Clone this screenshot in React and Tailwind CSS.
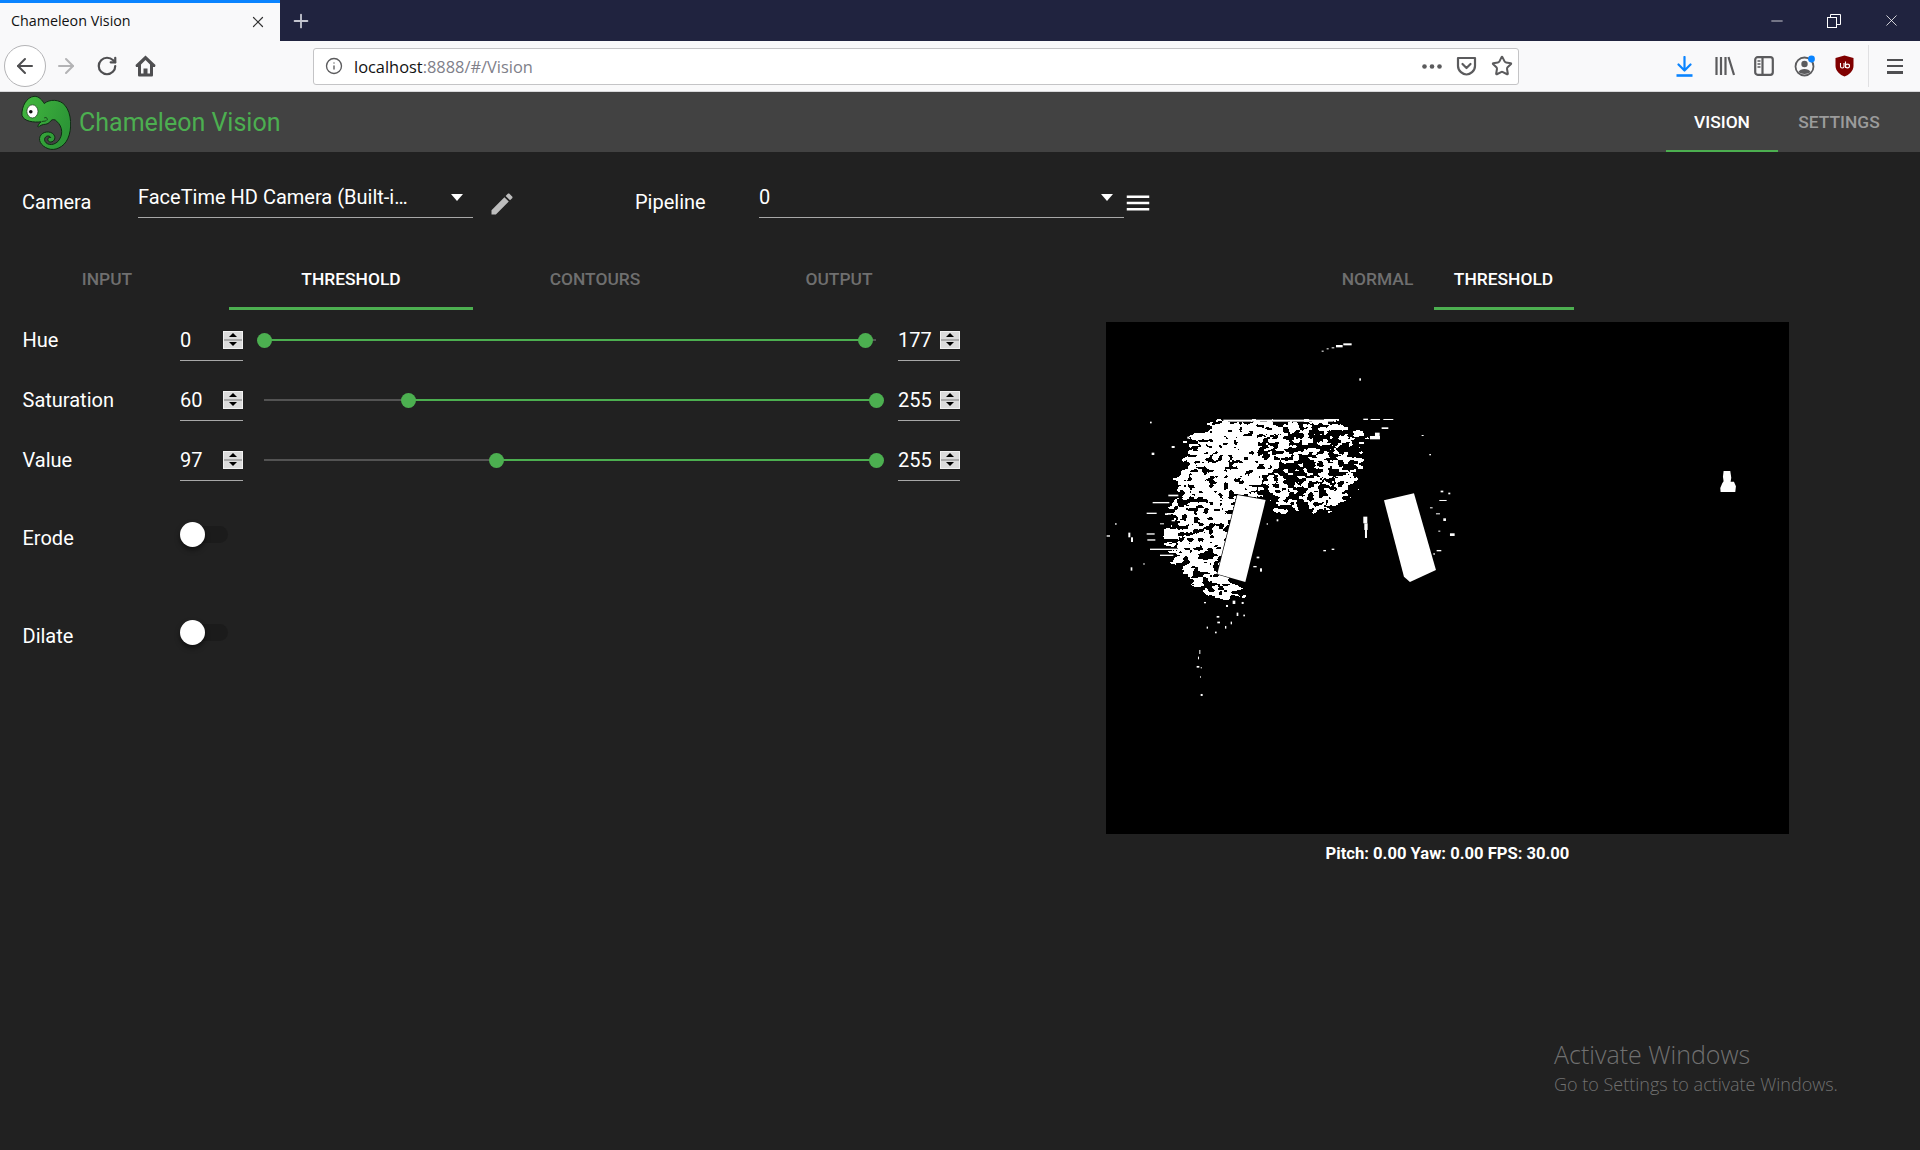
import { useMemo } from "react"
import { ArrowLeft, ArrowRight, RotateCw, Info, Star, X, Plus, Minus } from "lucide-react"

// seeded noise so the threshold picture stays the same on each render
const hash = (x, y) => {
  const s = Math.sin(x * 127.1 + y * 311.7) * 43758.5453
  return s - Math.floor(s)
}

const valueNoise = (x, y) => {
  const ix = Math.floor(x)
  const iy = Math.floor(y)
  const fx = x - ix
  const fy = y - iy
  const u = fx * fx * (3 - 2 * fx)
  const v = fy * fy * (3 - 2 * fy)
  const a = hash(ix, iy)
  const b = hash(ix + 1, iy)
  const c = hash(ix, iy + 1)
  const d = hash(ix + 1, iy + 1)
  return a * (1 - u) * (1 - v) + b * u * (1 - v) + c * (1 - u) * v + d * u * v
}

const insidePoly = (poly, x, y) => {
  let inside = false
  for (let i = 0, j = poly.length - 1; i < poly.length; j = i++) {
    const [xi, yi] = poly[i]
    const [xj, yj] = poly[j]
    if (yi > y !== yj > y && x < ((xj - xi) * (y - yi)) / (yj - yi) + xi) inside = !inside
  }
  return inside
}

const blobRegion = [
  [300, 325], [370, 303], [700, 298], [785, 318], [782, 420], [752, 520], [690, 572], [500, 568],
  [405, 540], [352, 770], [420, 800], [405, 835], [310, 822], [238, 745], [205, 660], [215, 530],
  [240, 470], [270, 385],
]

const speckles = [
  [665, 92, 6, 3], [680, 85, 6, 3], [695, 82, 8, 3], [708, 75, 20, 7], [730, 70, 25, 6], [778, 175, 5, 7],
  [790, 296, 14, 4], [812, 297, 28, 3], [850, 297, 30, 3], [810, 348, 30, 10], [825, 338, 14, 10], [845, 322, 20, 5],
  [215, 378, 9, 6], [155, 398, 8, 7], [150, 305, 5, 5], [262, 350, 6, 6],
  [965, 345, 6, 3], [988, 402, 5, 4], [1022, 512, 8, 5], [1045, 518, 6, 5], [1018, 540, 22, 3], [990, 562, 8, 3],
  [1008, 580, 12, 3], [1030, 595, 8, 8], [1015, 632, 6, 3], [1050, 640, 14, 8], [1010, 690, 14, 4],
  [85, 638, 6, 14], [93, 652, 6, 14], [140, 640, 24, 4], [142, 658, 24, 4], [150, 686, 90, 4], [180, 704, 40, 4],
  [158, 546, 50, 4], [205, 524, 30, 5], [140, 578, 30, 4], [195, 580, 18, 4], [20, 646, 10, 4], [45, 610, 5, 4], [92, 742, 5, 10],
  [790, 590, 12, 20], [793, 610, 10, 20], [795, 630, 6, 24], [670, 690, 8, 4], [695, 686, 8, 4],
  [530, 598, 5, 6], [470, 710, 8, 5], [480, 745, 6, 10], [460, 738, 10, 4], [350, 888, 8, 5], [378, 855, 6, 6],
  [398, 842, 8, 10], [425, 846, 6, 6], [410, 878, 5, 10], [430, 884, 5, 5], [312, 846, 6, 4],
  [1000, 700, 5, 4], [500, 610, 4, 4], [130, 730, 4, 4], [180, 610, 12, 3], [215, 600, 10, 4],
  // sparse dots under the table
  [298, 990, 3, 12], [294, 1010, 3, 8], [290, 1038, 8, 5], [302, 1042, 4, 3], [300, 1068, 2, 6], [302, 1122, 6, 6],
  [320, 920, 4, 6], [345, 935, 5, 5], [375, 918, 4, 8], [392, 905, 4, 8], [352, 905, 8, 5],
]

const buildBlobPath = () => {
  let d = ""
  for (let y = 296; y < 850; y += 3) {
    let runStart = null
    for (let x = 170; x <= 820; x += 3) {
      const n = valueNoise(x / 15, y / 9) * 0.72 + valueNoise(x / 6, y / 5) * 0.28
      // wobble the outline so the edge breaks up like the camera noise
      const wobbleX = (valueNoise(x / 25, y / 11 + 40) - 0.5) * 70
      const wobbleY = (valueNoise(x / 22 + 60, y / 14) - 0.5) * 24
      const density = x < 470 && y < 530 ? 0.66 : x < 420 ? 0.56 : x > 560 ? 0.48 : 0.52
      const on = insidePoly(blobRegion, x + wobbleX, y + wobbleY) && n < density
      if (on && runStart === null) runStart = x
      if (!on && runStart !== null) {
        d += `M${runStart} ${y}h${x - runStart}v3h-${x - runStart}z`
        runStart = null
      }
    }
  }
  return d
}

const ThresholdImage = () => {
  const blob = useMemo(buildBlobPath, [])
  return (
    <svg className="block w-[683px] h-[512px] bg-black" viewBox="0 0 683 512">
      <g transform="translate(-6 -2) scale(0.3333)" fill="#fff">
        <path d={blob} shapeRendering="crispEdges" />
        <rect x="370" y="299" width="330" height="6" />
        {speckles.map(([x, y, w, h], i) => (
          <rect key={i} x={x} y={y} width={w} height={h} />
        ))}
        <polygon points="412,525 497,540 436,786 352,762" stroke="#000" strokeWidth="4" paintOrder="stroke" strokeLinejoin="round" />
        <polygon points="852,541 942,520 1008,750 930,786 912,770" />
        <path d="M1871 453 h20 l3 20 l-2 12 h10 l6 14 l-2 17 h-44 l-1 -12 l6 -14 l4 -6 l-2 -14 z" />
      </g>
    </svg>
  )
}

const ChameleonLogo = () => (
  <svg className="w-[51px] h-[55px] shrink-0" viewBox="60 27 156 166">
    <defs>
      <linearGradient id="skin" x1="0" y1="0" x2="1" y2="0.4">
        <stop offset="0" stopColor="#43b83f" />
        <stop offset="1" stopColor="#2c9636" />
      </linearGradient>
    </defs>
    <path
      d="M66 88 C64 62 80 32 103 30 C118 29 128 42 134 52 C150 38 182 38 198 58 C218 82 220 130 206 160 C194 186 166 198 146 190 C124 182 112 162 125 147 C136 135 160 136 166 152 C170 164 156 175 147 167 C142 160 148 154 154 156 C150 148 136 150 135 162 C136 178 160 184 176 168 C192 150 192 124 172 106 C168 100 158 100 155 104 C150 112 142 116 132 116 C120 118 118 126 114 122 C116 116 120 112 124 108 C104 110 72 108 66 88 Z"
      fill="url(#skin)"
      stroke="#0d2a12"
      strokeWidth="3"
      strokeLinejoin="round"
    />
    <ellipse cx="98" cy="76" rx="17" ry="20" fill="#fff" stroke="#123016" strokeWidth="2" />
    <circle cx="93" cy="77" r="5.5" fill="#111" />
    <path d="M134 96 C142 92 146 100 142 104 M126 108 C132 104 136 108 140 104" fill="none" stroke="#123016" strokeWidth="2.5" />
  </svg>
)

const SpinBox = () => (
  <div className="flex flex-col w-[20px] h-[18px] border border-[#f2f2f2] bg-[#dcdcdc] shrink-0">
    <div className="flex-1 flex items-center justify-center bg-[#dcdcdc] border-b-2 border-[#a9a9a9]">
      <div className="w-0 h-0 border-x-[4px] border-x-transparent border-b-[4px] border-b-black" />
    </div>
    <div className="flex-1 flex items-center justify-center bg-[#dcdcdc]">
      <div className="w-0 h-0 border-x-[4px] border-x-transparent border-t-[4px] border-t-black" />
    </div>
  </div>
)

const NumberField = ({ value, width }) => (
  <div className={`flex items-center justify-between h-[41px] -mb-[21px] -mt-[20px] pb-[1px] border-b border-[#a8a8a8] shrink-0 ${width}`}>
    <span className="text-[20px] text-white">{value}</span>
    <SpinBox />
  </div>
)

const SliderRow = ({ label, low, high, max }) => {
  const lowPct = (low / max) * 100
  const highPct = (high / max) * 100
  return (
    <div className="flex items-center h-[60px] pl-[22.5px]">
      <div className="w-[157.5px] text-[20px] text-white shrink-0">{label}</div>
      <NumberField value={low} width="w-[63px]" />
      <div className="relative flex-1 h-[2px] ml-[21px] mr-[22px] bg-[#535353]">
        <div className="absolute top-0 h-[2px] bg-[#4caf50]" style={{ left: `${lowPct}%`, width: `${highPct - lowPct}%` }} />
        <div className="absolute top-[-6px] -ml-[7.5px] w-[15px] h-[15px] rounded-full bg-[#4caf50]" style={{ left: `${lowPct}%` }} />
        <div className="absolute top-[-6px] -ml-[7.5px] w-[15px] h-[15px] rounded-full bg-[#4caf50]" style={{ left: `${highPct}%` }} />
      </div>
      <NumberField value={high} width="w-[62px]" />
    </div>
  )
}

const ToggleRow = ({ label, className }) => (
  <div className={`flex items-center pl-[22.5px] ${className}`}>
    <div className="w-[157.5px] text-[20px] text-white pt-[6px]">{label}</div>
    <div className="relative w-[48px] h-[17px] -mt-[2px] rounded-full bg-[#1b1b1b]">
      <div className="absolute left-0 top-[-4px] w-[25px] h-[25px] rounded-full bg-white shadow-[0_3px_5px_rgba(0,0,0,0.5)]" />
    </div>
  </div>
)

const Tab = ({ label, active, className }) => (
  <div
    className={`flex items-center justify-center h-[59px] pt-[1px] text-[17.4px] font-medium border-b-[3px] ${
      active ? "text-white border-[#4caf50]" : "text-[#6f6f6f] border-transparent"
    } ${className}`}
  >
    {label}
  </div>
)

const SelectField = ({ value, className, arrowClass }) => (
  <div className={`flex items-center justify-between h-[35px] border-b border-[#a8a8a8] text-[20px] text-white ${className}`}>
    <span className="-mt-[6px]">{value}</span>
    <div className={`w-0 h-0 -mt-[6px] border-x-[6px] border-x-transparent border-t-[7px] border-t-white ${arrowClass}`} />
  </div>
)

const BrowserChrome = () => (
  <>
    <div className="flex h-[41px] bg-[#20233f] shrink-0">
      <div className="flex items-center justify-between w-[280px] pl-[11px] pr-[13px] bg-[#f9f9fa] border-t-[3px] border-[#0a84ff]">
        <span className="-mt-[2px] font-['Open_Sans',sans-serif] text-[14.3px] text-[#111]">Chameleon Vision</span>
        <X className="w-[18px] h-[18px] text-[#333]" strokeWidth={1.6} />
      </div>
      <div className="flex items-center pl-[10px]">
        <Plus className="w-[22px] h-[22px] text-[#c4c6d0]" strokeWidth={2} />
      </div>
      <div className="flex items-center ml-auto text-white">
        <Minus className="w-[18px] h-[18px] mr-[41px]" strokeWidth={1} />
        <svg className="w-[14px] h-[14px] mr-[41px]" viewBox="0 0 14 14" fill="none" stroke="#fff" strokeWidth="1">
          <rect x="0.5" y="3.5" width="9" height="10" />
          <path d="M3.5 3.5 V0.5 H13.5 V10.5 H9.5" />
        </svg>
        <X className="w-[19px] h-[19px] mr-[19px]" strokeWidth={1} />
      </div>
    </div>
    <div className="flex items-center h-[51px] bg-[#f9f9fa] shrink-0 border-b border-[#d8d8da]">
      <div className="flex items-center justify-center w-[42px] h-[42px] ml-[4px] rounded-full bg-white border border-[#b4b4b6]">
        <ArrowLeft className="w-[24px] h-[24px] text-[#4f4f51]" strokeWidth={2} />
      </div>
      <ArrowRight className="w-[24px] h-[24px] ml-[8px] text-[#b3b3b5]" strokeWidth={2} />
      <RotateCw className="w-[22px] h-[22px] ml-[18px] text-[#4f4f51]" strokeWidth={2.4} />
      <svg className="w-[21px] h-[22px] ml-[17px] text-[#4f4f51]" viewBox="0 0 21 22" fill="currentColor">
        <path d="M10.5 0.5 L20.5 10 L20 12 L18 12 V20 C18 21 17.5 21.5 16.5 21.5 H4.5 C3.5 21.5 3 21 3 20 V12 L1 12 L0.5 10 Z M6 18.5 H8.5 V13.5 H12.5 V18.5 H15 V9.5 L10.5 5 L6 9.5 Z" fillRule="evenodd" />
      </svg>
      <div className="flex items-center w-[1206px] h-[37px] ml-[157px] pl-[11px] pr-[5px] bg-white border border-[#c4c4c6] rounded-[3px]">
        <Info className="w-[18px] h-[18px] text-[#5b5b5d]" strokeWidth={1.8} />
        <span className="ml-[11px] mt-[2px] font-['Open_Sans',sans-serif] text-[16.4px] text-[#111]">
          localhost<span className="text-[#80808a]">:8888/#/Vision</span>
        </span>
        <svg className="w-[20px] h-[5px] ml-auto text-[#5b5b5d]" viewBox="0 0 20 5" fill="currentColor">
          <circle cx="2.5" cy="2.5" r="2.3" />
          <circle cx="10" cy="2.5" r="2.3" />
          <circle cx="17.5" cy="2.5" r="2.3" />
        </svg>
        <svg className="w-[21px] h-[20px] ml-[14px] text-[#5b5b5d]" viewBox="0 0 21 20" fill="none" stroke="currentColor" strokeWidth="2.2" strokeLinejoin="round">
          <path d="M2 2 H19 V10 C19 15 14 18.5 10.5 18.5 C7 18.5 2 15 2 10 Z" />
          <path d="M6.5 8 L10.5 12 L14.5 8" strokeLinecap="round" />
        </svg>
        <Star className="w-[22px] h-[22px] ml-[14px] text-[#5b5b5d]" strokeWidth={2.2} />
      </div>
      <svg className="w-[17px] h-[21px] ml-[157px] text-[#0a84ff]" viewBox="0 0 17 21" fill="none" stroke="currentColor" strokeWidth="2.2" strokeLinecap="round" strokeLinejoin="round">
        <path d="M8.5 1 V14 M2.5 8.5 L8.5 14.5 L14.5 8.5" />
        <path d="M0.5 19.5 H16.5" strokeWidth="2.6" strokeLinecap="butt" />
      </svg>
      <svg className="w-[20px] h-[20px] ml-[22px] text-[#5b5b5d]" viewBox="0 0 20 20" fill="none" stroke="currentColor" strokeWidth="2.2">
        <path d="M1.5 1 V19 M6 1 V19 M10.5 1 V19 M13.5 1 L19 19" />
      </svg>
      <svg className="w-[20px] h-[20px] ml-[19px] text-[#5b5b5d]" viewBox="0 0 20 20" fill="none" stroke="currentColor" strokeWidth="2.2">
        <rect x="1.2" y="1.2" width="17.6" height="17.6" rx="2.5" />
        <path d="M8.5 1.2 V18.8" />
        <path d="M3.5 5 H6.5 M3.5 8 H6.5 M3.5 11 H6.5" strokeWidth="1.4" />
      </svg>
      <svg className="w-[22px] h-[22px] ml-[20px] text-[#5b5b5d]" viewBox="0 0 22 22">
        <circle cx="10.5" cy="11.5" r="9" fill="none" stroke="currentColor" strokeWidth="1.8" />
        <circle cx="10.5" cy="9" r="3.2" fill="currentColor" />
        <path d="M4.5 17 C6 13 15 13 16.5 17 C14 19.5 7 19.5 4.5 17 Z" fill="currentColor" />
        <circle cx="17.5" cy="4" r="3.4" fill="#0a84ff" />
      </svg>
      <svg className="w-[19px] h-[22px] ml-[19px]" viewBox="0 0 19 22">
        <path d="M9.5 0.5 L18.5 3 V11 C18.5 16 14 20 9.5 21.5 C5 20 0.5 16 0.5 11 V3 Z" fill="#800000" />
        <path d="M5.5 8 V11.5 C5.5 13.5 9 13.5 9 11.5 V8 M10.5 6.5 V13 M10.5 11 C10.5 8.5 14.5 8.5 14.5 11 C14.5 13.5 10.5 13.5 10.5 11" fill="none" stroke="#fff" strokeWidth="1.1" />
      </svg>
      <div className="w-px h-[42px] ml-[14px] bg-[#e0e0e2]" />
      <div className="flex flex-col justify-between w-[16px] h-[15px] ml-[18px]">
        <div className="h-[2.5px] bg-[#4f4f51]" />
        <div className="h-[2.5px] bg-[#4f4f51]" />
        <div className="h-[2.5px] bg-[#4f4f51]" />
      </div>
    </div>
  </>
)

export default function App() {
  return (
    <div className="relative flex flex-col w-full h-[1150px] overflow-hidden bg-[#212121] font-['Roboto',sans-serif]">
      <BrowserChrome />

      <header className="flex items-center h-[60px] pl-[20px] bg-[#424242] shrink-0">
        <ChameleonLogo />
        <div className="ml-[8px] pt-[2px] text-[25px] text-[#4caf50]">Chameleon Vision</div>
        <div className="flex ml-auto mr-[20px] self-stretch">
          <Tab label="VISION" active className="w-[112px] !h-[60px] !pt-[3px] !border-b-2" />
          <Tab label="SETTINGS" className="w-[122px] !h-[60px] !pt-[3px] !text-[#9b9b9b] !border-b-2" />
        </div>
      </header>

      <div className="flex items-start h-[99px] pt-[31px] shrink-0">
        <div className="w-[116px] ml-[22px] pt-[4px] text-[20px] text-white">Camera</div>
        <SelectField value="FaceTime HD Camera (Built-i…" className="w-[335px]" arrowClass="mr-[10px]" />
        <svg className="w-[28px] h-[28px] ml-[15px] mt-[7px] text-[#bdbdbd]" viewBox="0 0 24 24" fill="currentColor">
          <path d="M20.71 7.04c.39-.39.39-1.04 0-1.41l-2.34-2.34c-.37-.39-1.02-.39-1.41 0l-1.84 1.83 3.75 3.75M3 17.25V21h3.75L17.81 9.93l-3.75-3.75L3 17.25z" />
        </svg>
        <div className="w-[124px] ml-[119px] pt-[4px] text-[20px] text-white">Pipeline</div>
        <SelectField value="0" className="w-[365px]" arrowClass="mr-[11px]" />
        <svg className="w-[30px] h-[30px] -ml-[1px] mt-[5px] text-white" viewBox="0 0 24 24" fill="currentColor">
          <path d="M3 6H21V8H3V6M3 11H21V13H3V11M3 16H21V18H3V16Z" />
        </svg>
      </div>

      <div className="flex items-start flex-1">
        <div className="w-[1106px] shrink-0">
          <div className="flex w-[976px] -ml-[15px]">
            <Tab label="INPUT" className="flex-1" />
            <Tab label="THRESHOLD" active className="flex-1" />
            <Tab label="CONTOURS" className="flex-1" />
            <Tab label="OUTPUT" className="flex-1" />
          </div>
          <div className="w-[960px]">
            <SliderRow label="Hue" low={0} high={177} max={180} />
            <SliderRow label="Saturation" low={60} high={255} max={255} />
            <SliderRow label="Value" low={97} high={255} max={255} />
          </div>
          <ToggleRow label="Erode" className="mt-[27px]" />
          <ToggleRow label="Dilate" className="mt-[62px]" />
        </div>

        <div className="flex flex-col items-center w-[683px]">
          <div className="flex justify-center">
            <Tab label="NORMAL" className="w-[112px]" />
            <Tab label="THRESHOLD" active className="w-[140px]" />
          </div>
          <div className="mt-[12px]">
            <ThresholdImage />
          </div>
          <div className="mt-[8px] text-[16.6px] font-bold text-white">Pitch: 0.00 Yaw: 0.00 FPS: 30.00</div>
        </div>
      </div>

      {/* windows watermark sits over the page */}
      <div className="absolute left-[1554px] top-[1037px] font-['Open_Sans',sans-serif] font-light text-[#707070]">
        <div className="text-[25px] leading-[34px]">Activate Windows</div>
        <div className="text-[18px] leading-[24px] mt-[1px]">Go to Settings to activate Windows.</div>
      </div>
    </div>
  )
}
